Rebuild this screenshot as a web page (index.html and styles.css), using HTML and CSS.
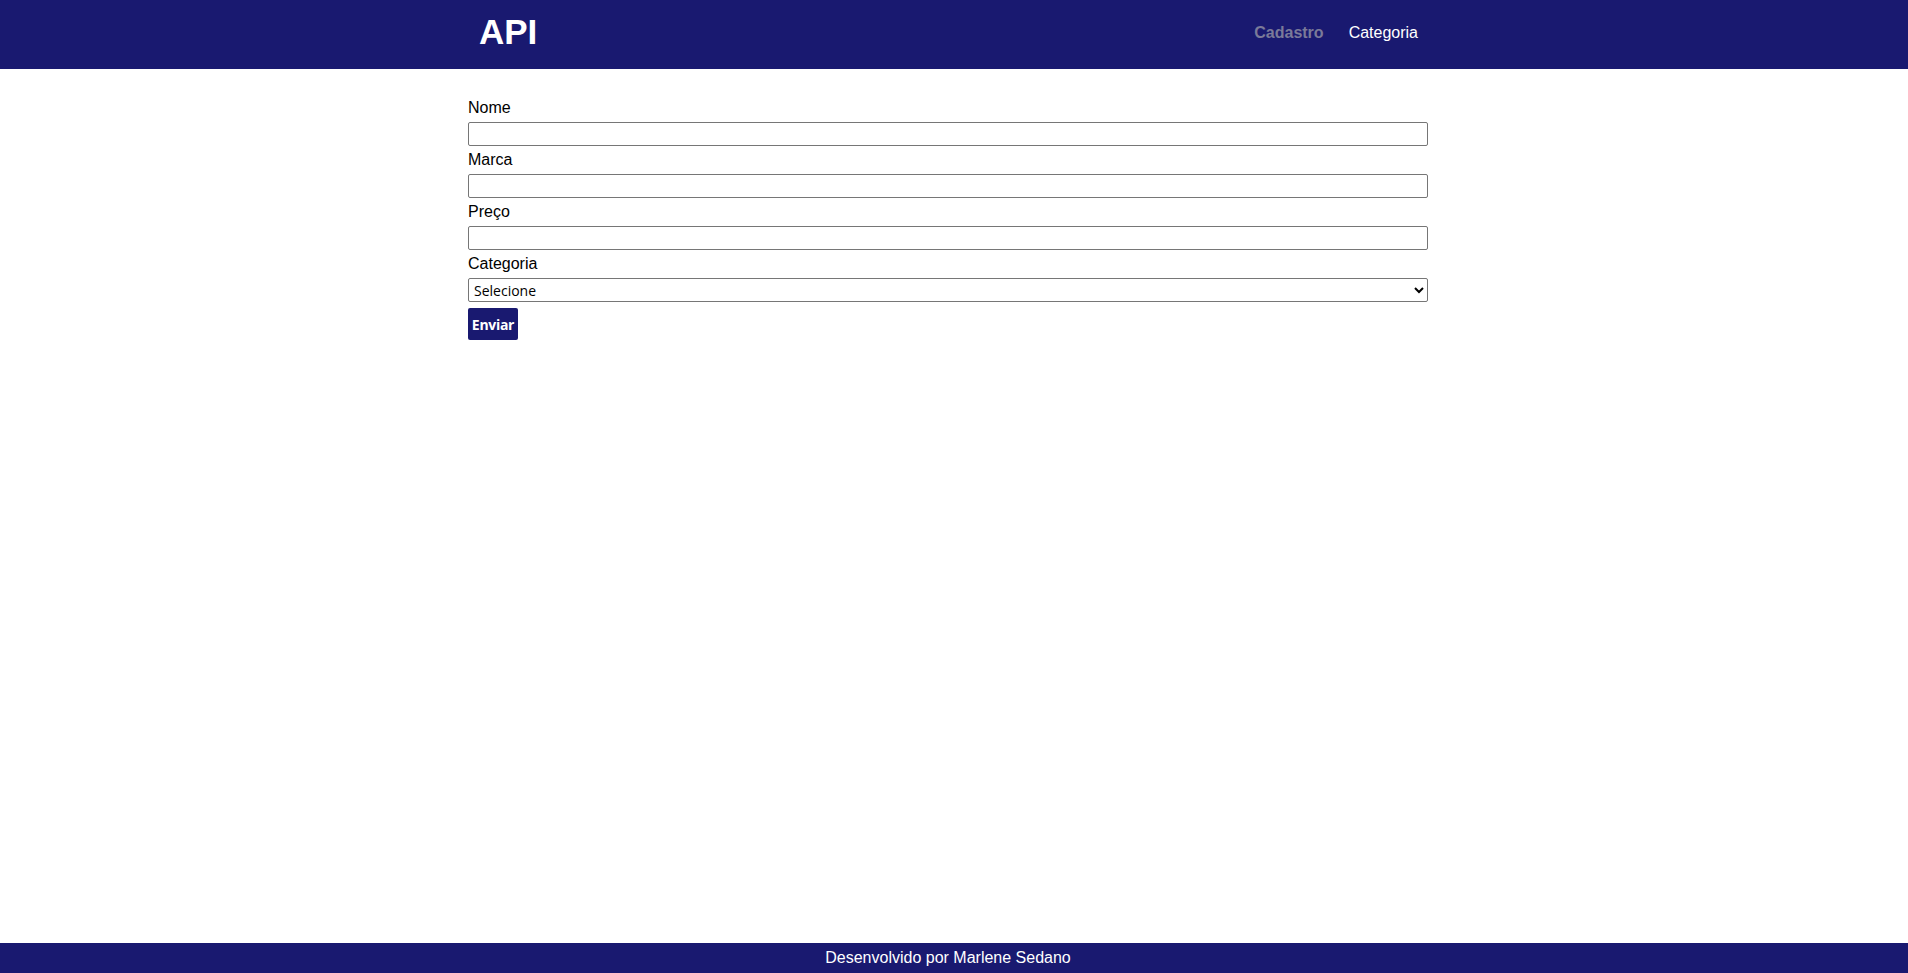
FILE: index.html
```html
<!DOCTYPE html>
<html lang="pt-BR">
<head>
<meta charset="utf-8">
<title>API</title>
<link rel="stylesheet" href="styles.css">
</head>
<body>
<header class="topbar">
  <div class="container topbar-inner">
    <h1 class="brand">API</h1>
    <nav class="nav">
      <a class="nav-link active" href="#">Cadastro</a>
      <a class="nav-link" href="#">Categoria</a>
    </nav>
  </div>
</header>
<main class="main">
  <div class="container">
    <form class="form">
      <label class="label" for="nome">Nome</label>
      <input class="field" id="nome" type="text">
      <label class="label" for="marca">Marca</label>
      <input class="field" id="marca" type="text">
      <label class="label" for="preco">Preço</label>
      <input class="field" id="preco" type="text">
      <label class="label" for="categoria">Categoria</label>
      <select class="field select" id="categoria">
        <option>Selecione</option>
      </select>
      <button class="btn" type="button">Enviar</button>
    </form>
  </div>
</main>
<footer class="footer">Desenvolvido por Marlene Sedano</footer>
</body>
</html>
```
FILE: styles.css
```css
* { box-sizing: border-box; }

html, body { height: 100%; }

body {
  margin: 0;
  font-family: "Liberation Sans", Arial, sans-serif;
  font-size: 16px;
  color: #000;
  display: flex;
  flex-direction: column;
  min-height: 100vh;
  background: #fff;
}

.container {
  width: 972px;
  margin: 0 auto;
  padding-right: 12px;
}

.topbar {
  background: #191970;
  height: 69px;
  flex-shrink: 0;
}

.topbar-inner {
  height: 100%;
  display: flex;
  align-items: center;
  justify-content: space-between;
  padding-left: 10px;
  padding-right: 22px;
  padding-bottom: 5px;
}

.brand {
  margin: 0;
  color: #fff;
  font-size: 35px;
  font-weight: bold;
  line-height: 40px;
  padding-left: 1px;
}

.nav {
  display: flex;
  gap: 25px;
  padding-top: 2px;
}

.nav-link {
  color: #fff;
  text-decoration: none;
  font-size: 16px;
  line-height: 18px;
}

.nav-link.active {
  color: #7a7a99;
  font-weight: bold;
}

.main {
  flex: 1;
  padding-top: 30px;
}

.form {
  display: flex;
  flex-direction: column;
  align-items: flex-start;
}

.label {
  display: block;
  line-height: 18px;
  font-size: 16px;
}

.field {
  display: block;
  width: 100%;
  height: 24px;
  margin: 5px 0 5px;
  border: 1px solid #767676;
  border-radius: 2px;
  background: #fff;
  font-size: 16px;
  padding: 1px 2px;
}

.select {
  font-family: "Open Sans", "Noto Sans", sans-serif;
  font-size: 14px;
  padding: 0 1px;
  color: #000;
}

.btn {
  margin-top: 1px;
  height: 32px;
  width: 50px;
  padding: 0;
  border: none;
  border-radius: 2px;
  background: #191970;
  color: #fff;
  font-family: "Open Sans", "Noto Sans", sans-serif;
  font-weight: bold;
  font-size: 14px;
  letter-spacing: -0.3px;
}

.footer {
  flex-shrink: 0;
  height: 30px;
  background: #191970;
  color: #fff;
  text-align: center;
  line-height: 30px;
  padding-right: 12px;
  font-size: 16px;
}
```
